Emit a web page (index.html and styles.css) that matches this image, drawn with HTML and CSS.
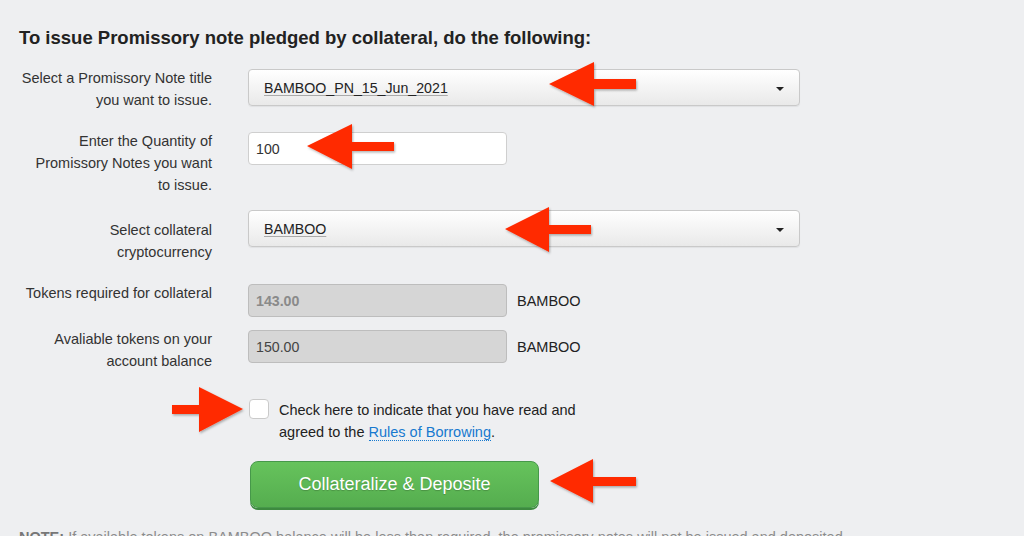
FILE: index.html
```html
<!DOCTYPE html>
<html lang="en">
<head>
    <meta charset="UTF-8">
    <meta name="viewport" content="width=device-width, initial-scale=1.0">
    <title>Issue Promissory Note</title>
    <link rel="stylesheet" href="styles.css">
</head>
<body>
    <div class="page">
        <h2 class="title">To issue Promissory note pledged by collateral, do the following:</h2>

        <form class="pn-form">
            <div class="form-row row-title">
                <label class="form-label">Select a Promissory Note title<br>you want to issue.</label>
                <div class="select-box wide">
                    <span class="select-value">BAMBOO_PN_15_Jun_2021</span>
                    <b class="caret"></b>
                </div>
            </div>

            <div class="form-row row-qty">
                <label class="form-label">Enter the Quantity of<br>Promissory Notes you want<br>to issue.</label>
                <input type="text" class="text-input" value="100">
            </div>

            <div class="form-row row-coin">
                <label class="form-label label-mid">Select collateral<br>cryptocurrency</label>
                <div class="select-box wide">
                    <span class="select-value">BAMBOO</span>
                    <b class="caret"></b>
                </div>
            </div>

            <div class="form-row row-required">
                <label class="form-label">Tokens required for collateral</label>
                <div class="input-unit">
                    <input type="text" class="text-input readonly strong" value="143.00" disabled>
                    <span class="unit">BAMBOO</span>
                </div>
            </div>

            <div class="form-row row-balance">
                <label class="form-label">Avaliable tokens on your<br>account balance</label>
                <div class="input-unit">
                    <input type="text" class="text-input readonly" value="150.00" disabled>
                    <span class="unit">BAMBOO</span>
                </div>
            </div>

            <div class="form-row row-agree">
                <div class="form-label"></div>
                <label class="agree">
                    <input type="checkbox" class="agree-box">
                    <span class="agree-text">Check here to indicate that you have read and<br>agreed to the <a href="#" class="rules-link">Rules of Borrowing</a>.</span>
                </label>
            </div>

            <div class="form-row row-submit">
                <div class="form-label"></div>
                <button type="button" class="deposit-button">Collateralize &amp; Deposite</button>
            </div>
        </form>

        <p class="note"><strong>NOTE:</strong> If available tokens on BAMBOO balance will be less than required, the promissory notes will not be issued and deposited.</p>

        <svg class="arrows" width="1024" height="536" viewBox="0 0 1024 536" xmlns="http://www.w3.org/2000/svg">
            <defs>
                <filter id="arrowShadow" x="-20%" y="-20%" width="140%" height="140%">
                    <feDropShadow dx="1" dy="1.5" stdDeviation="1.2" flood-color="#000" flood-opacity="0.3"/>
                </filter>
            </defs>
            <g fill="#ff2a00" filter="url(#arrowShadow)">
                <polygon points="549,84 594,62 594,79 636,79 636,89 594,89 594,106"/>
                <polygon points="307,146 352,124 352,142 394,142 394,151 352,151 352,169"/>
                <polygon points="505,229 549,207 549,225 591,225 591,234 549,234 549,252"/>
                <polygon points="243,409 199,387 199,405 172,405 172,414 199,414 199,432"/>
                <polygon points="550,481 593,459 593,477 636,477 636,486 593,486 593,503"/>
            </g>
        </svg>
    </div>
</body>
</html>
```

FILE: styles.css
```css
* {
    margin: 0;
    padding: 0;
    box-sizing: border-box;
}

body {
    background: #eeeff1;
    font-family: 'Liberation Sans', Arial, sans-serif;
    color: #333;
    font-size: 14.5px;
    overflow: hidden;
}

.page {
    position: relative;
    width: 1024px;
    height: 536px;
    padding: 28px 0 0 19px;
    overflow: hidden;
}

.title {
    font-size: 18.5px;
    line-height: 20px;
    font-weight: 700;
    color: #222;
}

.pn-form {
    margin-left: -19px;
}

.form-row {
    display: flex;
    align-items: flex-start;
    margin-top: 21px;
}

.row-coin { margin-top: 14px; }
.row-balance { margin-top: 13px; }
.row-agree { margin-top: 27px; }
.row-submit { margin-top: 18px; }

.form-label {
    flex: 0 0 212px;
    margin-right: 36px;
    margin-top: -2px;
    text-align: right;
    line-height: 22px;
    white-space: nowrap;
    color: #333;
}

.form-label.label-mid {
    margin-top: 9px;
}

.select-box {
    display: flex;
    align-items: center;
    justify-content: space-between;
    width: 552px;
    height: 37px;
    padding: 0 15px;
    border: 1px solid #c9c9c9;
    border-radius: 4px;
    background: linear-gradient(#ffffff 0%, #f4f4f4 50%, #e9e9e9 100%);
    box-shadow: 0 1px 1px rgba(0,0,0,0.06);
}

.select-value {
    font-size: 14.2px;
    color: #222;
    text-decoration: underline;
    text-decoration-color: #aaa;
    text-underline-offset: 2px;
}

.caret {
    width: 0;
    height: 0;
    border-left: 4px solid transparent;
    border-right: 4px solid transparent;
    border-top: 4px solid #222;
    margin-top: 2px;
}

.text-input {
    width: 259px;
    height: 33px;
    padding: 0 7px;
    border: 1px solid #cfcfcf;
    border-radius: 4px;
    background: #fff;
    font-family: 'Liberation Sans', Arial, sans-serif;
    font-size: 14.2px;
    color: #333;
}

.text-input.readonly {
    background: #d6d6d6;
    border-color: #bdbdbd;
    color: #444;
}

.text-input.strong {
    color: #8a8a8a;
    font-weight: 700;
}

.input-unit {
    display: flex;
    align-items: center;
    gap: 10px;
}

.unit {
    color: #222;
}

.agree {
    display: flex;
    align-items: flex-start;
    gap: 10px;
    margin-left: 1px;
}

.agree-box {
    appearance: none;
    -webkit-appearance: none;
    width: 20px;
    height: 20px;
    flex: 0 0 20px;
    background: #fff;
    border: 1px solid #cacaca;
    border-radius: 4px;
}

.agree-text {
    line-height: 22px;
    color: #222;
}

.rules-link {
    color: #1779cf;
    text-decoration: none;
    border-bottom: 1px dotted #1779cf;
}

.deposit-button {
    width: 289px;
    height: 47px;
    margin-left: 2px;
    border: 1px solid #46984a;
    border-radius: 8px;
    background: linear-gradient(#66c35c 0%, #55ad4f 100%);
    box-shadow: 0 2px 0 #3d8a3f;
    color: #fff;
    font-family: 'Liberation Sans', Arial, sans-serif;
    font-size: 18px;
    text-shadow: 0 1px 1px rgba(0,0,0,0.2);
}

.note {
    margin-top: 19px;
    color: #8c8c8c;
    line-height: 20px;
    white-space: nowrap;
}

.note strong {
    color: #777;
}

.arrows {
    position: absolute;
    top: 0;
    left: 0;
    pointer-events: none;
}
```
